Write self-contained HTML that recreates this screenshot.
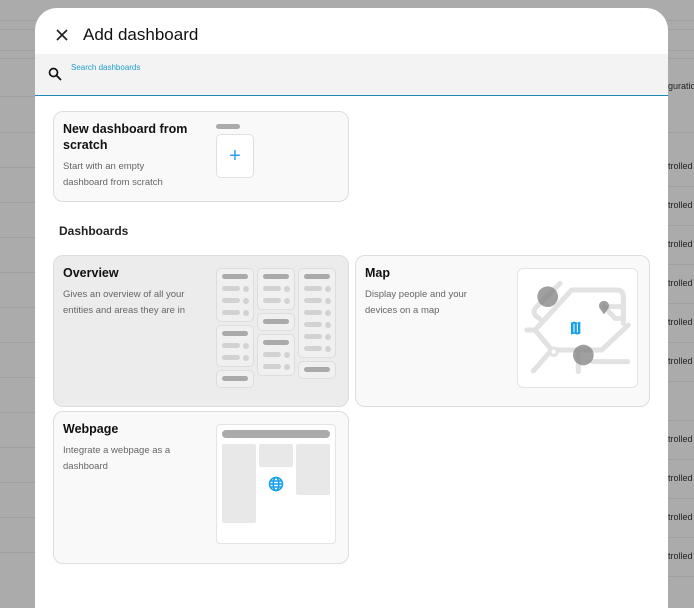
<!DOCTYPE html>
<html><head><style>
*{box-sizing:border-box;margin:0;padding:0}
body{width:694px;height:583px;overflow:hidden;background:#ababab;font-family:"Liberation Sans",sans-serif;position:relative}
.hl{position:absolute;height:1px;background:#9f9f9f}
.rt{position:absolute;left:668px;font-size:9px;color:#222}
.dlg{position:absolute;left:35px;top:8px;width:633px;height:600px;background:#fff;border-radius:22px 22px 0 0;overflow:hidden}
.a{position:absolute}
.card{position:absolute;border:1px solid #ddd;border-radius:10px;background:#f9f9f9}
.t{position:absolute;font-weight:bold;font-size:12.5px;color:#111;line-height:16px}
.d{position:absolute;font-size:9.5px;color:#666;line-height:16px}
.bar{position:absolute;height:5px;border-radius:3px;background:#aaa}
.sb{position:absolute;height:5px;border-radius:3px;background:#d2d2d2;width:18px}
.dot{position:absolute;width:6px;height:6px;border-radius:3px;background:#d2d2d2}
.mini{position:absolute;border:1px solid #ddd;border-radius:5px;background:#f0f0f0}
</style></head><body>
<div class="hl" style="left:0;top:20px;width:694px"></div>
<div class="hl" style="left:0;top:29px;width:694px"></div>
<div class="hl" style="left:0;top:50px;width:694px"></div>
<div class="hl" style="left:0;top:58px;width:694px"></div>
<div class="hl" style="left:0;top:96px;width:35px"></div>
<div class="hl" style="left:0;top:132px;width:694px"></div>
<div class="hl" style="left:0;top:167px;width:35px"></div>
<div class="hl" style="left:0;top:202px;width:35px"></div>
<div class="hl" style="left:0;top:237px;width:35px"></div>
<div class="hl" style="left:0;top:272px;width:35px"></div>
<div class="hl" style="left:0;top:307px;width:35px"></div>
<div class="hl" style="left:0;top:342px;width:35px"></div>
<div class="hl" style="left:0;top:377px;width:35px"></div>
<div class="hl" style="left:0;top:412px;width:35px"></div>
<div class="hl" style="left:0;top:447px;width:35px"></div>
<div class="hl" style="left:0;top:482px;width:35px"></div>
<div class="hl" style="left:0;top:517px;width:35px"></div>
<div class="hl" style="left:0;top:552px;width:35px"></div>
<div class="hl" style="left:668px;top:186px;width:26px"></div>
<div class="hl" style="left:668px;top:225px;width:26px"></div>
<div class="hl" style="left:668px;top:264px;width:26px"></div>
<div class="hl" style="left:668px;top:303px;width:26px"></div>
<div class="hl" style="left:668px;top:342px;width:26px"></div>
<div class="hl" style="left:668px;top:381px;width:26px"></div>
<div class="hl" style="left:668px;top:420px;width:26px"></div>
<div class="hl" style="left:668px;top:459px;width:26px"></div>
<div class="hl" style="left:668px;top:498px;width:26px"></div>
<div class="hl" style="left:668px;top:537px;width:26px"></div>
<div class="hl" style="left:668px;top:576px;width:26px"></div>
<div class="rt" style="top:81px">guration</div>
<div class="rt" style="top:161px">trolled</div>
<div class="rt" style="top:200px">trolled</div>
<div class="rt" style="top:239px">trolled</div>
<div class="rt" style="top:278px">trolled</div>
<div class="rt" style="top:317px">trolled</div>
<div class="rt" style="top:356px">trolled</div>
<div class="rt" style="top:434px">trolled</div>
<div class="rt" style="top:473px">trolled</div>
<div class="rt" style="top:512px">trolled</div>
<div class="rt" style="top:551px">trolled</div>

<div class="dlg">
<svg class="a" style="left:20px;top:20px" width="14" height="14" viewBox="0 0 14 14"><path d="M2 2L12 12M12 2L2 12" stroke="#222" stroke-width="1.7"/></svg>
<div class="a" style="left:48px;top:17px;font-size:17px;color:#111">Add dashboard</div>
<div class="a" style="left:0;top:46px;width:633px;height:42px;background:#f3f3f3;border-bottom:1px solid #1a8ab5"></div>
<svg class="a" style="left:13px;top:59px" width="14" height="14" viewBox="0 0 14 14"><circle cx="5.5" cy="5.5" r="4" stroke="#111" stroke-width="1.7" fill="none"/><path d="M8.5 8.5L13 13" stroke="#111" stroke-width="1.8"/></svg>
<div class="a" style="left:36px;top:55px;font-size:8px;color:#1f9fd0">Search dashboards</div>

<div class="card" style="left:18px;top:103px;width:296px;height:91px">
<div class="t" style="left:9px;top:9px">New dashboard from<br>scratch</div>
<div class="d" style="left:9px;top:47px">Start with an empty<br>dashboard from scratch</div>
<div class="bar" style="left:162px;top:12px;width:24px"></div>
<div class="a" style="left:162px;top:22px;width:38px;height:44px;background:#fff;border:1px solid #e0e0e0;border-radius:5px;color:#2aa0e8;font-size:20px;text-align:center;line-height:42px">+</div>
</div>

<div class="a" style="left:24px;top:216px;font-size:12px;font-weight:bold;color:#222">Dashboards</div>

<div class="card" style="left:18px;top:247px;width:296px;height:152px;background:#ececec">
<div class="t" style="left:9px;top:9px">Overview</div>
<div class="d" style="left:9px;top:31px">Gives an overview of all your<br>entities and areas they are in</div>
<div class="mini" style="left:162px;top:12px;width:38px;height:54px"></div>
<div class="bar" style="left:168px;top:18px;width:26px"></div>
<div class="sb" style="left:168px;top:30px"></div><div class="dot" style="left:189px;top:30px"></div>
<div class="sb" style="left:168px;top:42px"></div><div class="dot" style="left:189px;top:42px"></div>
<div class="sb" style="left:168px;top:54px"></div><div class="dot" style="left:189px;top:54px"></div>
<div class="mini" style="left:162px;top:69px;width:38px;height:42px"></div>
<div class="bar" style="left:168px;top:75px;width:26px"></div>
<div class="sb" style="left:168px;top:87px"></div><div class="dot" style="left:189px;top:87px"></div>
<div class="sb" style="left:168px;top:99px"></div><div class="dot" style="left:189px;top:99px"></div>
<div class="mini" style="left:162px;top:114px;width:38px;height:18px"></div>
<div class="bar" style="left:168px;top:120px;width:26px"></div>
<div class="mini" style="left:203px;top:12px;width:38px;height:42px"></div>
<div class="bar" style="left:209px;top:18px;width:26px"></div>
<div class="sb" style="left:209px;top:30px"></div><div class="dot" style="left:230px;top:30px"></div>
<div class="sb" style="left:209px;top:42px"></div><div class="dot" style="left:230px;top:42px"></div>
<div class="mini" style="left:203px;top:57px;width:38px;height:18px"></div>
<div class="bar" style="left:209px;top:63px;width:26px"></div>
<div class="mini" style="left:203px;top:78px;width:38px;height:42px"></div>
<div class="bar" style="left:209px;top:84px;width:26px"></div>
<div class="sb" style="left:209px;top:96px"></div><div class="dot" style="left:230px;top:96px"></div>
<div class="sb" style="left:209px;top:108px"></div><div class="dot" style="left:230px;top:108px"></div>
<div class="mini" style="left:244px;top:12px;width:38px;height:90px"></div>
<div class="bar" style="left:250px;top:18px;width:26px"></div>
<div class="sb" style="left:250px;top:30px"></div><div class="dot" style="left:271px;top:30px"></div>
<div class="sb" style="left:250px;top:42px"></div><div class="dot" style="left:271px;top:42px"></div>
<div class="sb" style="left:250px;top:54px"></div><div class="dot" style="left:271px;top:54px"></div>
<div class="sb" style="left:250px;top:66px"></div><div class="dot" style="left:271px;top:66px"></div>
<div class="sb" style="left:250px;top:78px"></div><div class="dot" style="left:271px;top:78px"></div>
<div class="sb" style="left:250px;top:90px"></div><div class="dot" style="left:271px;top:90px"></div>
<div class="mini" style="left:244px;top:105px;width:38px;height:18px"></div>
<div class="bar" style="left:250px;top:111px;width:26px"></div>
</div>

<div class="card" style="left:320px;top:247px;width:295px;height:152px">
<div class="t" style="left:9px;top:9px">Map</div>
<div class="d" style="left:9px;top:31px">Display people and your<br>devices on a map</div>
<div class="a" style="left:161px;top:12px;width:121px;height:120px;background:#fff;border:1px solid #e4e4e4;border-radius:6px;overflow:hidden">
<svg width="125" height="125" viewBox="0 0 375 375" style="position:absolute;left:-3px;top:-4px">
<g stroke="#e2e2e2" stroke-width="15" fill="none" stroke-linecap="round" stroke-linejoin="round">
<path d="M135 55L62 128Q52 140 62 152L75 162"/>
<path d="M35 195H60L170 75H305Q325 75 325 95V175"/>
<path d="M60 195L110 255H260L340 180"/>
<path d="M110 255L55 318M190 268V320M232 290H338"/>
<path d="M268 125L300 160H325M285 125H325"/>
</g>
<circle cx="116" cy="260" r="11" fill="#fff" stroke="#e2e2e2" stroke-width="9"/>
<circle cx="98" cy="95" r="31" fill="rgba(128,128,128,0.75)"/>
<circle cx="205" cy="270" r="31" fill="rgba(128,128,128,0.75)"/>
<path d="M252 122a15 15 0 1 1 28 8l-13 18-13-18a15 15 0 0 1-2-8z" fill="rgba(128,128,128,0.75)"/>
<path d="M168 173l9-3 10 3 9-3v36l-9 3-10-3-9 3z" fill="#16a0e8"/>
<path d="M177 176v26M187 176v26" stroke="#fff" stroke-width="3"/>
</svg>
</div>
</div>

<div class="card" style="left:18px;top:403px;width:296px;height:153px">
<div class="t" style="left:9px;top:9px">Webpage</div>
<div class="d" style="left:9px;top:31px">Integrate a webpage as a<br>dashboard</div>
<div class="a" style="left:162px;top:12px;width:120px;height:120px;background:#fff;border:1px solid #e4e4e4;border-radius:4px">
<div class="a" style="left:5px;top:5px;width:108px;height:8px;border-radius:4px;background:#aaa"></div>
<div class="a" style="left:5px;top:19px;width:34px;height:79px;border-radius:2px;background:#e8e8e8"></div>
<div class="a" style="left:42px;top:19px;width:34px;height:23px;border-radius:2px;background:#e8e8e8"></div>
<div class="a" style="left:79px;top:19px;width:34px;height:51px;border-radius:2px;background:#e8e8e8"></div>
<svg class="a" style="left:51px;top:51px" width="16" height="16" viewBox="0 0 16 16"><g stroke="#16a0e8" stroke-width="1.6" fill="none"><circle cx="8" cy="8" r="6.5"/><ellipse cx="8" cy="8" rx="2.8" ry="6.5"/><path d="M1.5 8H14.5M2.5 5H13.5M2.5 11H13.5"/></g></svg>
</div>
</div>
</div>
</body></html>
